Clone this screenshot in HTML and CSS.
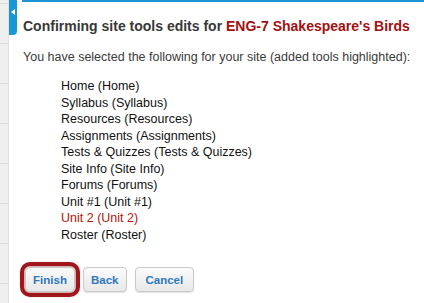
FILE: index.html
```html
<!DOCTYPE html>
<html lang="en">

<head>
  <meta charset="UTF-8">
  <meta name="viewport" content="width=device-width, initial-scale=1.0">
  <title>Confirming site tools edits</title>
  <link rel="stylesheet" href="styles.css">
</head>

<body>
  <div class="side">
    <div class="rail"></div>
    <div class="toggle">
      <svg width="9" height="12" viewBox="0 0 9 12"><path d="M2 6 L6 3 L6 9 Z" fill="#fff"/></svg>
    </div>
  </div>
  <main class="content">
    <h2 class="title">Confirming site tools edits for <span class="site-name">ENG-7 Shakespeare's Birds</span></h2>
    <p class="intro">You have selected the following for your site (added tools highlighted):</p>
    <ul class="tools">
      <li>Home (Home)</li>
      <li>Syllabus (Syllabus)</li>
      <li>Resources (Resources)</li>
      <li>Assignments (Assignments)</li>
      <li>Tests &amp; Quizzes (Tests &amp; Quizzes)</li>
      <li>Site Info (Site Info)</li>
      <li>Forums (Forums)</li>
      <li>Unit #1 (Unit #1)</li>
      <li class="added">Unit 2 (Unit 2)</li>
      <li>Roster (Roster)</li>
    </ul>
    <div class="actions">
      <button class="btn btn-marked">Finish</button>
      <button class="btn">Back</button>
      <button class="btn btn-wide">Cancel</button>
    </div>
  </main>
</body>

</html>
```

FILE: styles.css
```css
body {
  font-family: "Liberation Sans", Arial, sans-serif;
  margin: 0;
  padding: 0;
  background-color: #fff;
  display: flex;
  height: 303px;
  overflow: hidden;
}

.side {
  display: flex;
  width: 22px;
  flex-shrink: 0;
}

.rail {
  width: 8px;
  background-color: #efefef;
  background-image: repeating-linear-gradient(to bottom, transparent 0, transparent 3px, #dcdcdc 3px, #dcdcdc 4px, transparent 4px, transparent 40px);
  border-right: 1px solid #e2e2e2;
}

.toggle {
  width: 8px;
  height: 35px;
  background-color: #1a96d4;
  border-bottom-right-radius: 4px;
  padding-top: 6px;
  box-sizing: border-box;
}

.toggle svg {
  display: block;
}

.content {
  flex: 1;
  border-top: 2px solid #1a96d4;
  padding-left: 1px;
}

.title {
  margin: 15px 0 0 0;
  font-size: 14px;
  line-height: 18px;
  font-weight: bold;
  color: #383838;
  white-space: nowrap;
}

.site-name {
  color: #a50f0f;
}

.intro {
  margin: 14px 0 0 0;
  font-size: 12.5px;
  line-height: 16px;
  color: #3a3a3a;
  white-space: nowrap;
}

.tools {
  list-style-type: none;
  margin: 13px 0 0 0;
  padding: 0 0 0 38px;
  font-size: 12.5px;
  line-height: 16.5px;
  color: #111;
}

.tools .added {
  color: #b3140c;
}

.actions {
  display: flex;
  gap: 8px;
  margin-top: 24px;
  padding-left: 2px;
}

.btn {
  height: 25px;
  padding: 0 7px;
  font-family: "Liberation Sans", Arial, sans-serif;
  font-size: 11.5px;
  font-weight: bold;
  color: #2f78bd;
  background: linear-gradient(to bottom, #fbfbfb, #e8e8e8);
  border: 1px solid #c9c9c9;
  border-radius: 4px;
  box-shadow: 0 1px 1px rgba(0, 0, 0, 0.12);
}

.btn-wide {
  padding: 0 10px;
}

.btn-marked {
  width: 50px;
  border-radius: 5px;
  outline: 4px solid #a0161b;
  outline-offset: 1px;
  box-shadow: 0 0 3px 4px rgba(110, 0, 0, 0.3);
}
```
